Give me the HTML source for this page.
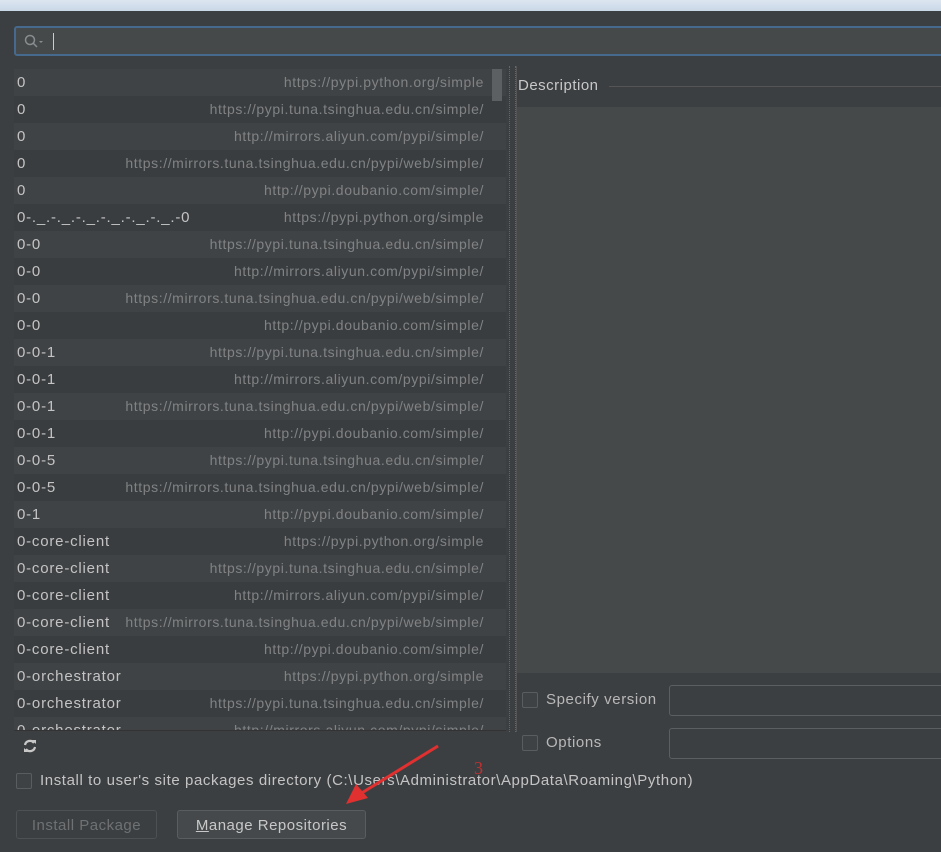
<!DOCTYPE html>
<html><head><meta charset="utf-8"><style>
body{margin:0;width:941px;height:852px;background:#3c3f41;font-family:"Liberation Sans",sans-serif;position:relative;overflow:hidden;color:#bbb}
.top{position:absolute;left:0;top:0;width:941px;height:11px;background:linear-gradient(#dce6f0,#c9d7e6)}
.search{position:absolute;left:14px;top:26px;width:940px;height:30px;border:2px solid #46698e;border-radius:3px;background:#45494a;box-sizing:border-box}
.list{position:absolute;left:14px;top:69px;width:492px;height:661px;overflow:hidden;background:#3c3f41}
.row{height:27px;position:relative;line-height:27px}
.row:nth-child(odd){background:#404345}
.row:nth-child(even){background:#3a3d3f}
.row .n{position:absolute;left:3px;color:#c4c4c4;font-size:15px;letter-spacing:.8px}
.row .u{position:absolute;right:22px;color:#808284;font-size:14px;letter-spacing:.6px}
.sb{position:absolute;left:492px;top:69px;width:10px;height:32px;background:#5d6062}
.tool{position:absolute;left:14px;top:730px;width:492px;height:32px;background:#3c3f41;border-top:1px solid #333}
.sep{position:absolute;left:509px;top:66px;width:5px;height:666px;border-left:1px dotted #666;border-right:1px dotted #666}
.desc{position:absolute;left:517px;top:69px;right:0;height:38px;background:#3c3f41}
.desc span{position:absolute;left:1px;top:8px;font-size:15px;letter-spacing:.5px;color:#c8c8c8}
.desc i{position:absolute;left:92px;right:0;top:17px;border-top:1px solid #555}
.dbody{position:absolute;left:517px;top:107px;right:0;height:566px;background:#45494a}
.vl{position:absolute;left:516px;top:66px;width:1px;height:666px;background:#555}
.cb{position:absolute;width:14px;height:14px;border:1px solid #5a5d60;border-radius:2px;background:#3f4244}
.lbl{position:absolute;font-size:15px;letter-spacing:.6px;color:#b8b8b8}
.field{position:absolute;left:669px;width:300px;height:29px;border:1px solid #5c5f62;border-radius:3px;background:#3c3f41}
.btn{position:absolute;top:810px;height:29px;border:1px solid #555;border-radius:3px;font-size:15px;letter-spacing:.5px;line-height:29px;text-align:center;box-sizing:border-box}
</style></head><body>
<div class="top"></div>
<div class="search"><svg style="position:absolute;left:8px;top:5px" width="22" height="16"><circle cx="6" cy="7" r="4.5" fill="none" stroke="#8a8d90" stroke-width="1.5"/><line x1="9" y1="10" x2="13" y2="14" stroke="#8a8d90" stroke-width="1.5"/><path d="M15 8h4l-2 2z" fill="#8a8d90"/></svg><div style="position:absolute;left:37px;top:5px;width:1px;height:17px;background:#ccc"></div></div>
<div class="list">
<div class="row"><span class="n">0</span><span class="u">https://pypi.python.org/simple</span></div>
<div class="row"><span class="n">0</span><span class="u">https://pypi.tuna.tsinghua.edu.cn/simple/</span></div>
<div class="row"><span class="n">0</span><span class="u">http://mirrors.aliyun.com/pypi/simple/</span></div>
<div class="row"><span class="n">0</span><span class="u">https://mirrors.tuna.tsinghua.edu.cn/pypi/web/simple/</span></div>
<div class="row"><span class="n">0</span><span class="u">http://pypi.doubanio.com/simple/</span></div>
<div class="row"><span class="n">0-._.-._.-._.-._.-._.-._.-0</span><span class="u">https://pypi.python.org/simple</span></div>
<div class="row"><span class="n">0-0</span><span class="u">https://pypi.tuna.tsinghua.edu.cn/simple/</span></div>
<div class="row"><span class="n">0-0</span><span class="u">http://mirrors.aliyun.com/pypi/simple/</span></div>
<div class="row"><span class="n">0-0</span><span class="u">https://mirrors.tuna.tsinghua.edu.cn/pypi/web/simple/</span></div>
<div class="row"><span class="n">0-0</span><span class="u">http://pypi.doubanio.com/simple/</span></div>
<div class="row"><span class="n">0-0-1</span><span class="u">https://pypi.tuna.tsinghua.edu.cn/simple/</span></div>
<div class="row"><span class="n">0-0-1</span><span class="u">http://mirrors.aliyun.com/pypi/simple/</span></div>
<div class="row"><span class="n">0-0-1</span><span class="u">https://mirrors.tuna.tsinghua.edu.cn/pypi/web/simple/</span></div>
<div class="row"><span class="n">0-0-1</span><span class="u">http://pypi.doubanio.com/simple/</span></div>
<div class="row"><span class="n">0-0-5</span><span class="u">https://pypi.tuna.tsinghua.edu.cn/simple/</span></div>
<div class="row"><span class="n">0-0-5</span><span class="u">https://mirrors.tuna.tsinghua.edu.cn/pypi/web/simple/</span></div>
<div class="row"><span class="n">0-1</span><span class="u">http://pypi.doubanio.com/simple/</span></div>
<div class="row"><span class="n">0-core-client</span><span class="u">https://pypi.python.org/simple</span></div>
<div class="row"><span class="n">0-core-client</span><span class="u">https://pypi.tuna.tsinghua.edu.cn/simple/</span></div>
<div class="row"><span class="n">0-core-client</span><span class="u">http://mirrors.aliyun.com/pypi/simple/</span></div>
<div class="row"><span class="n">0-core-client</span><span class="u">https://mirrors.tuna.tsinghua.edu.cn/pypi/web/simple/</span></div>
<div class="row"><span class="n">0-core-client</span><span class="u">http://pypi.doubanio.com/simple/</span></div>
<div class="row"><span class="n">0-orchestrator</span><span class="u">https://pypi.python.org/simple</span></div>
<div class="row"><span class="n">0-orchestrator</span><span class="u">https://pypi.tuna.tsinghua.edu.cn/simple/</span></div>
<div class="row"><span class="n">0-orchestrator</span><span class="u">http://mirrors.aliyun.com/pypi/simple/</span></div>
</div>
<div class="sb"></div>
<div class="tool"><svg style="position:absolute;left:8px;top:7px" width="16" height="16"><path d="M3 7a5 5 0 0 1 9-2" fill="none" stroke="#c8c8c8" stroke-width="2.2"/><path d="M13 9a5 5 0 0 1-9 2" fill="none" stroke="#c8c8c8" stroke-width="2.2"/><path d="M10 2l4 0 0 4z" fill="#c8c8c8"/><path d="M6 14l-4 0 0-4z" fill="#c8c8c8"/></svg></div>
<div class="sep"></div>
<div class="vl"></div>
<div class="desc"><span>Description</span><i></i></div>
<div class="dbody"></div>
<div class="cb" style="left:522px;top:692px"></div><div class="lbl" style="left:546px;top:691px">Specify version</div>
<div class="field" style="top:685px"></div>
<div class="cb" style="left:522px;top:735px"></div><div class="lbl" style="left:546px;top:734px">Options</div>
<div class="field" style="top:728px"></div>
<div class="cb" style="left:16px;top:773px"></div><div class="lbl" style="left:40px;top:772px;color:#c4c4c4">Install to user's site packages directory (C:\Users\Administrator\AppData\Roaming\Python)</div>
<div class="btn" style="left:16px;width:141px;color:#6f7173;border-color:#4e5153">Install Package</div>
<div class="btn" style="left:177px;width:189px;color:#c8c8c8;background:#45494b;border-color:#5a5d60"><u>M</u>anage Repositories</div>
<svg style="position:absolute;left:330px;top:740px" width="130" height="70"><line x1="108" y1="6" x2="30" y2="54" stroke="#e03030" stroke-width="3"/><path d="M16 64 L26 44 L38 58 Z" fill="#e03030"/></svg>
<div style="position:absolute;left:474px;top:758px;font-size:18px;color:#c03030;font-family:'Liberation Serif',serif">3</div>
</body></html>
